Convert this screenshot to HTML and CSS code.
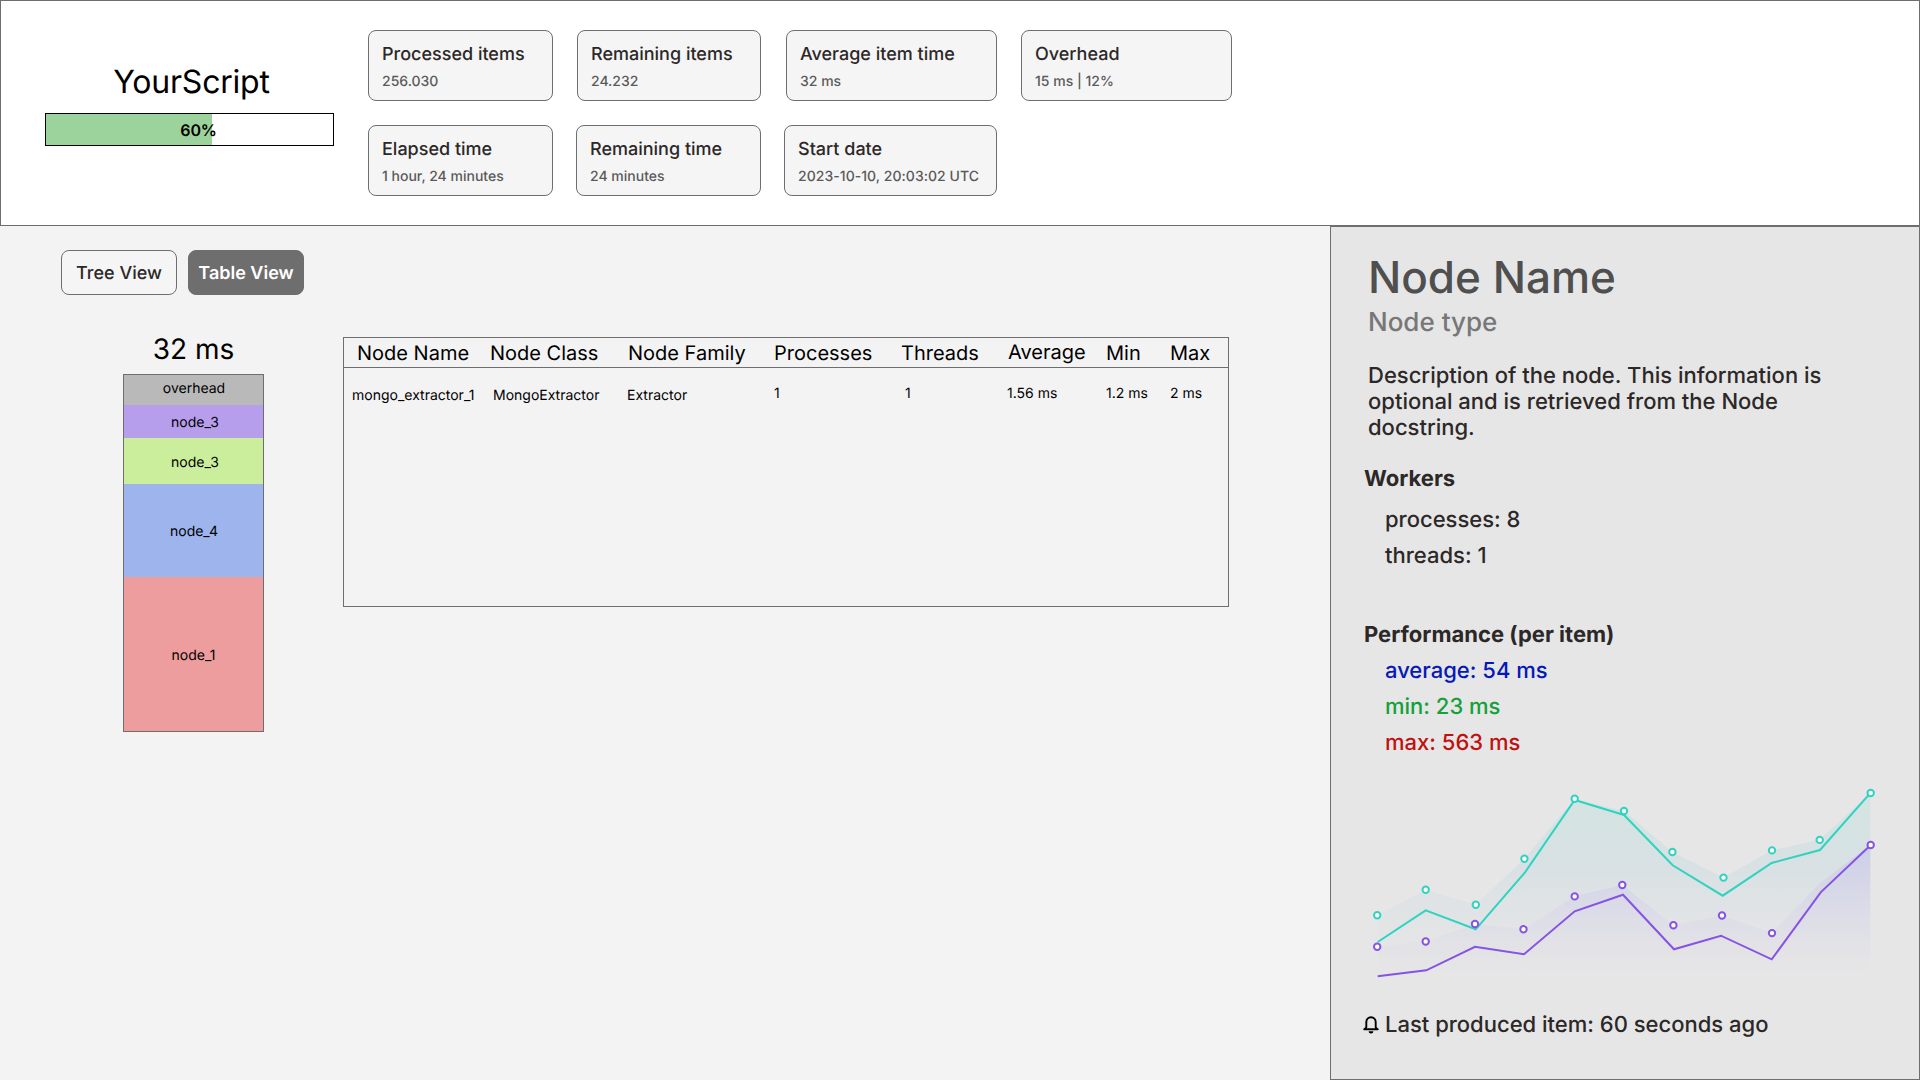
FILE: index.html
```html
<!DOCTYPE html>
<html lang="en">
<head>
<meta charset="utf-8">
<title>YourScript</title>
<link rel="stylesheet" href="styles.css">
</head>
<body>
<header class="header">
  <div class="script">
    <h1 class="script-name">YourScript</h1>
    <div class="progress"><div class="progress-fill"></div><span class="progress-label">60%</span></div>
  </div>
  <div class="stats">
    <div class="stats-row">
      <div class="card w185"><div class="card-title">Processed items</div><div class="card-value">256.030</div></div>
      <div class="card w184 gap24"><div class="card-title">Remaining items</div><div class="card-value">24.232</div></div>
      <div class="card w211 gap25"><div class="card-title">Average item time</div><div class="card-value">32 ms</div></div>
      <div class="card w211 gap24"><div class="card-title">Overhead</div><div class="card-value">15 ms | 12%</div></div>
    </div>
    <div class="stats-row">
      <div class="card w185"><div class="card-title">Elapsed time</div><div class="card-value">1 hour, 24 minutes</div></div>
      <div class="card w185 gap23"><div class="card-title">Remaining time</div><div class="card-value">24 minutes</div></div>
      <div class="card w213 gap23"><div class="card-title">Start date</div><div class="card-value card-date">2023-10-10, 20:03:02 UTC</div></div>
    </div>
  </div>
</header>
<div class="body">
  <main class="main">
    <div class="tabs">
      <button class="tab">Tree View</button>
      <button class="tab tab-active">Table View</button>
    </div>
    <div class="content">
      <section class="breakdown">
        <h2 class="total">32 ms</h2>
        <div class="stack">
          <div class="seg seg-overhead">overhead</div>
          <div class="seg seg-purple">node_3</div>
          <div class="seg seg-green">node_3</div>
          <div class="seg seg-blue">node_4</div>
          <div class="seg seg-red">node_1</div>
        </div>
      </section>
      <section class="table">
        <div class="thead">
          <span>Node Name</span><span>Node Class</span><span>Node Family</span><span>Processes</span><span>Threads</span><span class="raised">Average</span><span>Min</span><span>Max</span>
        </div>
        <div class="trow">
          <span class="low">mongo_extractor_1</span><span class="low">MongoExtractor</span><span class="low">Extractor</span><span>1</span><span>1</span><span>1.56 ms</span><span>1.2 ms</span><span>2 ms</span>
        </div>
      </section>
    </div>
  </main>
  <aside class="side">
    <h2 class="node-name">Node Name</h2>
    <p class="node-type">Node type</p>
    <p class="desc">Description of the node. This information is<br>optional and is retrieved from the Node<br>docstring.</p>
    <h3 class="sub">Workers</h3>
    <ul class="list workers"><li>processes: 8</li><li>threads: 1</li></ul>
    <h3 class="sub">Performance (per item)</h3>
    <ul class="list perf"><li class="avg">average: 54 ms</li><li class="min">min: 23 ms</li><li class="max">max: 563 ms</li></ul>
    <svg class="chart" width="520" height="210" viewBox="1365 780 520 210">
      <defs>
        <linearGradient id="gt" gradientUnits="userSpaceOnUse" x1="0" y1="793" x2="0" y2="974"><stop offset="0" stop-color="#4fd8c8" stop-opacity=".12"/><stop offset=".4" stop-color="#9bc8d8" stop-opacity=".18"/><stop offset="1" stop-color="#c8d4e4" stop-opacity="0"/></linearGradient>
        <linearGradient id="gp" gradientUnits="userSpaceOnUse" x1="0" y1="845" x2="0" y2="974"><stop offset="0" stop-color="#b0a4f8" stop-opacity=".28"/><stop offset="1" stop-color="#c8b8f0" stop-opacity="0"/></linearGradient>
      </defs>
      <path fill="url(#gt)" d="M1377.5 915.3L1425.7 889.7L1475.8 904.7L1524.3 858.7L1574.7 798.7L1624 811L1672.3 852L1723.5 877.5L1772 850.3L1819.6 839.8L1870.3 793V974H1377.5Z"/>
      <path fill="url(#gp)" d="M1377.5 946.8L1425.7 941.5L1475 924L1523.5 929.3L1574.7 896.3L1622.3 885L1673.3 925.3L1722 915.5L1772 933L1820 883L1870.3 845V974H1377.5Z"/>
      <g class="line">
        <path stroke="#31d3c0" d="M1377.7 942L1425.7 910.3L1475.7 929.3L1525 872.3L1574.7 800L1624 815L1672.7 865.3L1722.7 895.7L1771.7 863L1820 850L1870.7 792.7"/>
        <path stroke="#8653e4" d="M1377.7 976.3L1426.3 970.3L1475 946.8L1524 954.3L1574.7 911.3L1623 894.7L1674 949.3L1721 935.7L1771.7 959.3L1820.7 892.3L1870.7 845"/>
      </g>
      <g class="dots" stroke="#31d3c0">
        <circle cx="1377.2" cy="915.3" r="3.2"/><circle cx="1425.7" cy="889.8" r="3.2"/><circle cx="1475.8" cy="904.8" r="3.2"/><circle cx="1524.4" cy="858.7" r="3.2"/><circle cx="1574.7" cy="798.8" r="3.2"/><circle cx="1624" cy="811" r="3.2"/><circle cx="1672.4" cy="852" r="3.2"/><circle cx="1723.5" cy="877.6" r="3.2"/><circle cx="1772" cy="850.4" r="3.2"/><circle cx="1819.7" cy="839.9" r="3.2"/><circle cx="1870.7" cy="793" r="3.2"/>
      </g>
      <g class="dots" stroke="#8653e4">
        <circle cx="1377.2" cy="946.8" r="3.2"/><circle cx="1425.7" cy="941.5" r="3.2"/><circle cx="1475" cy="924" r="3.2"/><circle cx="1523.5" cy="929.3" r="3.2"/><circle cx="1574.7" cy="896.4" r="3.2"/><circle cx="1622.3" cy="885" r="3.2"/><circle cx="1673.4" cy="925.3" r="3.2"/><circle cx="1722" cy="915.5" r="3.2"/><circle cx="1772" cy="933.1" r="3.2"/><circle cx="1870.7" cy="845" r="3.2"/>
      </g>
    </svg>
    <div class="last">
      <svg class="bell" width="16" height="18" viewBox="0 0 16 18"><path fill="none" stroke="#000" stroke-width="1.9" stroke-linejoin="round" stroke-linecap="round" d="M1.200 13.300H14.800M1.600 13.100L3.300 11.300V6C3.300 3.200 5.300 1.200 8 1.200S12.700 3.200 12.700 6V11.300L14.400 13.100"/><path d="M5.600 15.200H10.400A2.400 2.400 0 0 1 5.600 15.200Z"/></svg>
      <span>Last produced item: 60 seconds ago</span>
    </div>
  </aside>
</div>
</body>
</html>
```
FILE: styles.css
```css
* { box-sizing: border-box; margin: 0; padding: 0; }
body { width: 1920px; height: 1080px; overflow: hidden; background: #f3f3f3; color: #000; font-family: Inter, "Liberation Sans", sans-serif; text-rendering: geometricPrecision; }
h1, h2, h3 { font-weight: 400; }
.header { display: flex; height: 226px; background: #fff; border: 1px solid #6e6e6e; padding: 29px 0 0 44px; }
.script { width: 289px; margin-top: 32px; }
.script-name { font-size: 32px; line-height: 40px; text-align: center; letter-spacing: -.2px; padding-left: 4px; }
.progress { position: relative; width: 289px; height: 33px; margin-top: 11px; border: 1px solid #000; display: flex; align-items: center; justify-content: center; }
.progress-fill { position: absolute; left: 0; top: 0; bottom: 0; width: 166px; background: #9cd39c; }
.progress-label { position: relative; left: 9px; font-size: 16px; font-weight: 600; letter-spacing: -.2px; }
.stats { margin-left: 34px; display: flex; flex-direction: column; gap: 24px; }
.stats-row { display: flex; }
.card { height: 71px; background: #f5f5f5; border: 1px solid #6e6e6e; border-radius: 8px; padding: 13px 0 0 13px; white-space: nowrap; }
.w184 { width: 184px; } .w185 { width: 185px; } .w211 { width: 211px; } .w213 { width: 213px; }
.gap23 { margin-left: 23px; } .gap24 { margin-left: 24px; } .gap25 { margin-left: 25px; }
.card-title { font-size: 18px; line-height: 22px; font-weight: 500; color: #2c2828; }
.card-value { margin-top: 7px; font-size: 14px; line-height: 18px; font-weight: 500; color: #5a5a5a; }
.card-date { letter-spacing: .05px; }
.body { display: flex; height: 854px; }
.main { width: 1330px; padding-top: 24px; }
.tabs { display: flex; gap: 11px; padding-left: 61px; }
.tab { width: 116px; height: 45px; padding-top: 2px; border: 1px solid #6e6e6e; border-radius: 8px; background: #f5f5f5; color: #2c2828; font: 500 18px/22px Inter, sans-serif; white-space: nowrap; text-rendering: inherit; }
.tab-active { background: #6e6e6e; color: #fff; font-weight: 600; }
.content { display: flex; align-items: flex-start; padding-left: 123px; }
.breakdown { width: 141px; padding-top: 36px; }
.total { font-size: 28px; line-height: 36px; text-align: center; height: 43px; }
.stack { height: 358px; border: 1px solid #6e6e6e; font-size: 14px; }
.seg { display: flex; justify-content: center; align-items: center; padding-top: 2px; }
.seg-overhead { height: 30px; background: #b9b9b9; padding: 0 0 3px 1px; }
.seg-purple { height: 33px; background: #b69eec; padding-left: 3px; }
.seg-green { height: 46px; background: #cbee9c; padding-left: 3px; }
.seg-blue { height: 93px; background: #9db4ed; padding-left: 1px; }
.seg-red { height: 154px; background: #ed9d9d; }
.table { width: 886px; height: 270px; margin: 42px 0 0 79px; border: 1px solid #6e6e6e; }
.thead, .trow { display: grid; white-space: nowrap; }
.thead { grid-template-columns: 133px 138px 146px 127px 107px 98px 64px 60px; height: 30px; padding-left: 13px; border-bottom: 1px solid #6e6e6e; font-size: 20px; line-height: 30px; }
.raised { margin-top: -1px; }
.trow { grid-template-columns: 141px 134px 147px 131px 102px 99px 64px 60px; padding: 16px 0 0 8px; font-size: 14px; line-height: 20px; }
.low { padding-top: 2px; }
.side { width: 590px; border: 1px solid #6e6e6e; background: #e6e6e6; color: #2c2828; padding-left: 34px; font-weight: 500; }
.node-name { margin: 22px 0 0 3px; font-size: 44px; line-height: 56px; font-weight: 500; color: #4f4f4f; }
.node-type { margin: 2px 0 0 3px; font-size: 26px; line-height: 32px; color: #777; }
.desc { margin: 24px 0 0 3px; font-size: 22px; line-height: 26px; }
.sub { margin-left: -1px; font-size: 22px; line-height: 26px; font-weight: 700; }
.desc + .sub { margin-top: 25px; }
.list { list-style: none; padding-left: 20px; font-size: 22px; line-height: 36px; }
.workers { padding-top: 10px; margin-bottom: 48px; }
.perf { padding-top: 5px; }
.avg { color: #0519b8; } .min { color: #16a03a; } .max { color: #c01010; }
.chart { display: block; margin-top: 19px; }
.line { fill: none; stroke-width: 2; }
.dots { fill: #fff; stroke-width: 2; }
.last { display: flex; align-items: center; gap: 6px; margin: 21px 0 0 -2px; font-size: 22px; line-height: 28px; }
```
